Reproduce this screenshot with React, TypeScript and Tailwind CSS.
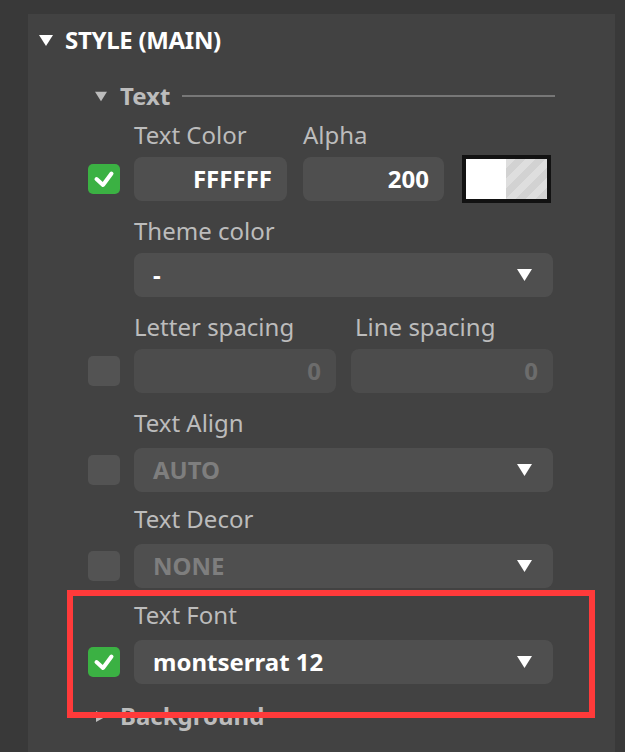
import React from 'react';

const Tri = ({ className = '' }: { className?: string }) => (
    <svg viewBox="0 0 14 11" className={className} fill="currentColor">
        <polygon points="0,0 14,0 7,11" />
    </svg>
);

const CheckBox = ({ checked, hidden }: { checked?: boolean; hidden?: boolean }) => {
    if (hidden) return <div className="w-[32px] h-[30px] shrink-0" />;
    return checked ? (
        <div className="w-[32px] h-[30px] shrink-0 rounded-[5px] bg-[#3bb143] flex items-center justify-center">
            <svg viewBox="0 0 32 30" className="w-[32px] h-[30px]">
                <polyline points="8.5,15 15,21 23.5,9.5" fill="none" stroke="white" strokeWidth="4" strokeLinecap="round" strokeLinejoin="round" />
            </svg>
        </div>
    ) : (
        <div className="w-[32px] h-[30px] shrink-0 rounded-[5px] bg-[#535353]" />
    );
};

const Label = ({ children, className = '' }: { children: React.ReactNode; className?: string }) => (
    <div className={`h-8 leading-8 text-[24px] text-[#bcbcbc] whitespace-nowrap ${className}`}>{children}</div>
);

const Dropdown = ({ value, muted }: { value: string; muted?: boolean }) => (
    <div className="flex-1 h-11 rounded-lg bg-[#4f4f4f] flex items-center pl-[19px] pr-[21px]">
        <span className={`flex-1 text-[24px] font-bold ${muted ? 'text-[#7e7e7e]' : 'text-white'}`}>{value}</span>
        <Tri className="w-[15px] h-[12px] text-white" />
    </div>
);

const Field = ({
    label,
    checked,
    noCheck,
    loose,
    className = '',
    children,
}: {
    label: React.ReactNode;
    checked?: boolean;
    noCheck?: boolean;
    loose?: boolean;
    className?: string;
    children: React.ReactNode;
}) => (
    <div className={className}>
        <div className="pl-[46px]">{label}</div>
        <div className={`${loose ? 'mt-[9px]' : 'mt-1.5'} h-11 flex items-center gap-[14px]`}>
            <CheckBox checked={checked} hidden={noCheck} />
            {children}
        </div>
    </div>
);

export default function App() {
    return (
        <div className="w-[625px] h-[752px] overflow-hidden bg-[#393939] pt-[14px] pl-[28px] pr-[10px] font-['Noto_Sans',sans-serif]">
            <div className="relative h-full bg-[#424242] pt-[10px]">
                <div className="flex items-center h-8 pl-[11px] gap-3">
                    <Tri className="w-[14px] h-[11px] text-white" />
                    <span className="text-[24px] font-bold text-white tracking-[-0.3px]">STYLE (MAIN)</span>
                </div>

                <div className="mt-[24px] flex items-center h-8 pl-[67px] pr-[60px]">
                    <Tri className="w-[12px] h-[11px] text-[#bcbcbc]" />
                    <span className="ml-[13px] text-[24px] font-bold text-[#bcbcbc]">Text</span>
                    <div className="ml-3 flex-1 h-[2px] bg-[#777777]" />
                </div>

                <div className="mt-[7px] pl-[60px] pr-[62px] flex flex-col">
                    <Field
                        checked
                        label={
                            <div className="flex">
                                <Label className="w-[169px]">Text Color</Label>
                                <Label>Alpha</Label>
                            </div>
                        }
                    >
                        <div className="w-[153px] h-11 rounded-lg bg-[#4f4f4f] flex items-center justify-end pr-[15px] text-[24px] font-bold text-white">
                            FFFFFF
                        </div>
                        <div className="ml-[2px] w-[141px] h-11 rounded-lg bg-[#4f4f4f] flex items-center justify-end pr-[15px] text-[24px] font-bold text-white">
                            200
                        </div>
                        <div className="ml-[4px] w-[89px] h-[48px] shrink-0 border-4 border-[#121212] flex">
                            <div className="w-[40px] bg-white" />
                            <div className="flex-1 bg-[repeating-linear-gradient(135deg,#dedede_0_7px,#d2d2d2_7px_14px)]" />
                        </div>
                    </Field>

                    <Field noCheck className="mt-[14px]" label={<Label>Theme color</Label>}>
                        <Dropdown value="-" />
                    </Field>

                    <Field
                        className="mt-[14px]"
                        label={
                            <div className="flex">
                                <Label className="w-[221px]">Letter spacing</Label>
                                <Label>Line spacing</Label>
                            </div>
                        }
                    >
                        <div className="flex-1 grid grid-cols-2 gap-[15px]">
                            <div className="h-11 rounded-lg bg-[#4c4c4c] flex items-center justify-end pr-[15px] text-[24px] font-bold text-[#6c6c6c]">0</div>
                            <div className="h-11 rounded-lg bg-[#4c4c4c] flex items-center justify-end pr-[15px] text-[24px] font-bold text-[#6c6c6c]">0</div>
                        </div>
                    </Field>

                    <Field loose className="mt-[14px]" label={<Label>Text Align</Label>}>
                        <Dropdown value="AUTO" muted />
                    </Field>

                    <Field loose className="mt-[11px]" label={<Label>Text Decor</Label>}>
                        <Dropdown value="NONE" muted />
                    </Field>

                    <Field loose checked className="mt-[11px]" label={<Label>Text Font</Label>}>
                        <Dropdown value="montserrat 12" />
                    </Field>
                </div>

                <div className="mt-[16px] flex items-center h-8 pl-[68px]">
                    <svg viewBox="0 0 10 11" className="w-[10px] h-[11px] text-[#bcbcbc]" fill="currentColor">
                        <polygon points="0,0 10,5.5 0,11" />
                    </svg>
                    <span className="ml-[14px] text-[24px] font-bold text-[#bcbcbc]">Background</span>
                </div>

                <div className="absolute left-[39px] top-[576px] w-[528px] h-[128px] border-[6px] border-[#ff3a3a]" />
            </div>
        </div>
    );
}
